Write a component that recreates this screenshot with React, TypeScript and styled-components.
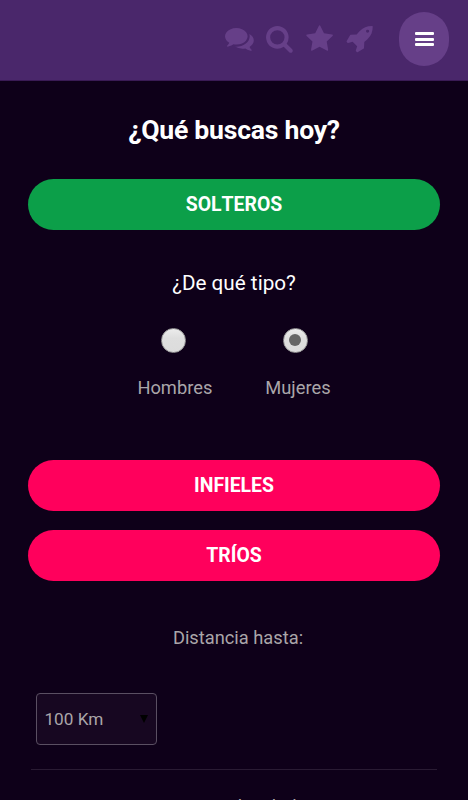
import React, { useState } from "react";
import styled, { createGlobalStyle } from "styled-components";

const GlobalStyle = createGlobalStyle`
  *, *::before, *::after { box-sizing: border-box; }
  html, body { margin: 0; height: 100%; overflow: hidden; background: #0e0019; }
  body, button, select { font-family: Roboto, "Liberation Sans", sans-serif; }
`;

const Page = styled.div`
  width: 468px;
  height: 800px;
  overflow: hidden;
  background: #0e0019;
  color: #aaa6a9;
`;

const Header = styled.header`
  height: 81px;
  padding: 12px 19px 0 0;
  display: flex;
  justify-content: flex-end;
  background: #4a276b;
  border-bottom: 1px solid #3a1b55;
`;

const Nav = styled.nav`
  display: flex;
  gap: 11.6px;
  padding-top: 12px;
  margin-right: 24.3px;
`;

const Icon = styled.svg`
  display: block;
  width: 28.8px;
  height: 28.8px;
  fill: #663f88;
`;

const MenuButton = styled.button`
  width: 50px;
  height: 54px;
  padding: 0;
  border: 0;
  border-radius: 25px;
  background: #663f88;
  display: flex;
  flex-direction: column;
  align-items: center;
  justify-content: center;
  gap: 2.4px;
`;

const MenuLine = styled.span`
  width: 19px;
  height: 3px;
  border-radius: 1px;
  background: #fff;
`;

const Main = styled.main`
  display: flex;
  flex-direction: column;
  padding: 0 28.4px;
`;

const Title = styled.h1`
  margin: 33px 0 0;
  font-size: 26.6px;
  letter-spacing: -0.25px;
  line-height: 32px;
  font-weight: 700;
  color: #fff;
  text-align: center;
`;

const PillButton = styled.button<{ $color: string; $top: number }>`
  height: 51px;
  margin-top: ${(p) => p.$top}px;
  padding: 0 0 1px;
  border: 0;
  border-radius: 26px;
  background: ${(p) => p.$color};
  color: #fff;
  font-size: 19.4px;
  font-weight: 700;
  font-kerning: none;
`;

const Subtitle = styled.h2`
  margin: 39.6px 0 0;
  font-size: 20.7px;
  line-height: 26px;
  font-weight: 400;
  color: #fff;
  text-align: center;
`;

const Options = styled.div`
  display: flex;
  justify-content: center;
  gap: 53px;
  height: 72px;
  margin-top: 32px;
`;

const Option = styled.label<{ $inset: number }>`
  display: flex;
  flex-direction: column;
  align-items: center;
  gap: 23px;
  font-size: 18.3px;
  line-height: 24px;

  input {
    margin: 0 ${(p) => p.$inset}px 0 0;
  }
`;

const Radio = styled.input`
  appearance: none;
  width: 25px;
  height: 25px;
  border: 1px solid #999;
  border-radius: 50%;
  background: linear-gradient(#ececec, #dedede 40%, #dcdcdc);
  display: grid;
  place-items: center;

  &:checked::before {
    content: "";
    width: 12px;
    height: 12px;
    border-radius: 50%;
    background: #666;
  }
`;

const FieldLabel = styled.div<{ $top: number }>`
  margin: ${(p) => p.$top}px 0 0 8px;
  font-size: 18.3px;
  line-height: 24px;
  text-align: center;
`;

const SelectBox = styled.button`
  width: 121px;
  height: 52px;
  margin: 43px 0 0 8px;
  padding: 0 8px 0 7px;
  display: flex;
  align-items: center;
  justify-content: space-between;
  border: 1.5px solid #5a4f62;
  border-radius: 4px;
  background: #170721;
  color: #aaa6a9;
  font-size: 17.2px;
`;

const Arrow = styled.svg`
  width: 8px;
  height: 8px;
  fill: #000;
`;

const Divider = styled.hr`
  width: 406px;
  height: 1px;
  margin: 24px 0 0 2.6px;
  border: 0;
  background: #291b33;
`;

const navIcons = [
  {
    name: "Mensajes",
    viewBox: "0 0 1792 1792",
    path: "M1408 768q0 139-94 257t-256.5 186.5-353.5 68.5q-86 0-176-16-124 88-278 128-36 9-86 16h-3q-11 0-20.5-8t-11.5-21q-1-3-1-6.5t.5-6.5 2-6l2.5-5 3.5-5.5 4-5 4.5-5 4-4.5q5-6 23-25t26-29.5 22.5-29 25-38.5 20.5-44q-124-72-195-177t-71-224q0-139 94-257t256.5-186.5 353.5-68.5 353.5 68.5 256.5 186.5 94 257zm384 256q0 120-71 224.5t-195 176.5q10 24 20.5 44t25 38.5 22.5 29 26 29.5 23 25q1 1 4 4.5t4.5 5 4 5 3.5 5.5l2.5 5 2 6 .5 6.5-1 6.5q-3 14-13 22t-22 7q-50-7-86-16-154-40-278-128-90 16-176 16-271 0-472-132 58 4 88 4 161 0 309-45t264-129q125-92 192-212t67-254q0-77-23-152 129 71 204 178t75 230z",
  },
  {
    name: "Buscar",
    viewBox: "0 0 1792 1792",
    path: "M1216 832q0-185-131.5-316.5t-316.5-131.5-316.5 131.5-131.5 316.5 131.5 316.5 316.5 131.5 316.5-131.5 131.5-316.5zm512 832q0 52-38 90t-90 38q-54 0-90-38l-343-342q-179 124-399 124-143 0-273.5-55.5t-225-150-150-225-55.5-273.5 55.5-273.5 150-225 225-150 273.5-55.5 273.5 55.5 225 150 150 225 55.5 273.5q0 220-124 399l343 343q37 37 37 90z",
  },
  {
    name: "Favoritos",
    viewBox: "50 -45 1792 1792",
    path: "M1728 647q0 22-26 48l-363 354 86 500q1 7 1 20 0 21-10.5 35.5t-30.5 14.5q-19 0-40-12l-449-236-449 236q-22 12-40 12-21 0-31.5-14.5t-10.5-35.5q0-6 2-20l86-500-364-354q-25-27-25-48 0-37 56-46l502-73 225-455q19-41 49-41t49 41l225 455 502 73q56 9 56 46z",
  },
  {
    name: "Impulsar",
    viewBox: "0 0 1792 1792",
    path: "M1440 448q0-40-28-68t-68-28-68 28-28 68 28 68 68 28 68-28 28-68zm224-288q0 249-75.5 430.5t-253.5 360.5q-81 80-195 176l-20 379q-2 16-16 26l-384 224q-7 4-16 4-12 0-23-9l-64-64q-13-14-8-32l85-276-281-281-276 85q-3 1-9 1-14 0-23-9l-64-64q-17-19-5-39l224-384q10-14 26-16l379-20q96-114 176-195 188-187 358-258t431-71q14 0 24 9.5t10 22.5z",
  },
];

const options = [
  { label: "Hombres", inset: 2 },
  { label: "Mujeres", inset: 5 },
];

export default function App() {
  const [kind, setKind] = useState("Mujeres");
  return (
    <Page>
      <GlobalStyle />
      <Header>
        <Nav>
          {navIcons.map((icon) => (
            <Icon key={icon.name} viewBox={icon.viewBox} aria-label={icon.name}>
              <path d={icon.path} />
            </Icon>
          ))}
        </Nav>
        <MenuButton aria-label="Menú">
          <MenuLine />
          <MenuLine />
          <MenuLine />
        </MenuButton>
      </Header>
      <Main>
        <Title>¿Qué buscas hoy?</Title>
        <PillButton $color="#0c9f49" $top={33.4}>SOLTEROS</PillButton>
        <Subtitle>¿De qué tipo?</Subtitle>
        <Options>
          {options.map(({ label, inset }) => (
            <Option key={label} $inset={inset}>
              <Radio
                type="radio"
                name="kind"
                checked={kind === label}
                onChange={() => setKind(label)}
              />
              {label}
            </Option>
          ))}
        </Options>
        <PillButton $color="#ff005c" $top={60.4}>INFIELES</PillButton>
        <PillButton $color="#ff005c" $top={19}>TRÍOS</PillButton>
        <FieldLabel $top={44.6}>Distancia hasta:</FieldLabel>
        <SelectBox>
          100 Km
          <Arrow viewBox="0 0 8 8">
            <path d="M0 0h8L4 8z" />
          </Arrow>
        </SelectBox>
        <Divider />
        <FieldLabel $top={25}>Rango de edad:</FieldLabel>
      </Main>
    </Page>
  );
}
